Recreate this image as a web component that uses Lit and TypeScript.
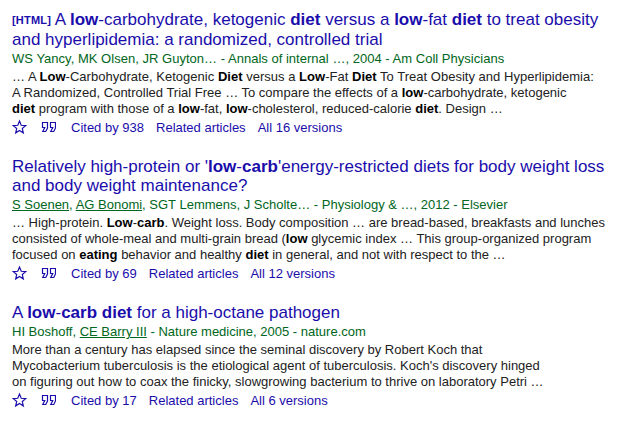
import { LitElement, html, css, TemplateResult } from "lit";
import { customElement, property } from "lit/decorators.js";

@customElement("result-actions")
class ResultActions extends LitElement {
  @property() cited = "";
  @property() versions = "";
  static styles = css`
    :host { display: flex; height: 19px; align-items: center; color: #1a0dab; font-size: 13px; line-height: 19px; }
    svg { display: block; fill: none; stroke: #1a0dab; stroke-width: 1.2; flex: none; width: 15px; height: 16px; margin-right: 14px; margin-top: -1px; }
    .cite { margin-right: 15px; }
    a { margin-right: 12px; }
  `;
  render() {
    return html`<svg viewBox="0 0 15 16"><path d="M7.5 11.57l3.824 2.308-1.015-4.35 3.379-2.926-4.45-.378L7.5 2.122 5.761 6.224l-4.449.378 3.379 2.926-1.015 4.35z"/></svg>
      <svg class="cite" viewBox="0 0 15 16"><path d="M6.5 3.5H1.5V8.5H3.75L1.75 12.5H4.75L6.5 9V3.5zM14.5 3.5H9.5V8.5H11.75L9.75 12.5H12.75L14.5 9V3.5z"/></svg>
      <a>Cited by ${this.cited}</a><a>Related articles</a><a>All ${this.versions} versions</a>`;
  }
}

interface Entry { title: TemplateResult[]; meta: TemplateResult; text: TemplateResult[]; cited: string; versions: string; }

const entries: Entry[] = [
  {
    title: [
      html`<div class="tagged"><span class="tag">[HTML]</span> A <b>low</b>-carbohydrate, ketogenic <b>diet</b> versus a <b>low</b>-fat <b>diet</b> to treat obesity</div>`,
      html`and hyperlipidemia: a randomized, controlled trial`,
    ],
    meta: html`<span class="wide">WS Yancy, MK Olsen, JR Guyton… - Annals of internal …, 2004 - Am Coll Physicians</span>`,
    text: [
      html`<span class="wide">… A <b>Low</b>-Carbohydrate, Ketogenic <b>Diet</b> versus a <b>Low</b>-Fat <b>Diet</b> To Treat Obesity and Hyperlipidemia:</span>`,
      html`A Randomized, Controlled Trial Free … To compare the effects of a <b>low</b>-carbohydrate, ketogenic`,
      html`<b>diet</b> program with those of a <b>low</b>-fat, <b>low</b>-cholesterol, reduced-calorie <b>diet</b>. Design …`,
    ],
    cited: "938", versions: "16",
  },
  {
    title: [
      html`Relatively high-protein or '<b>low</b>-<b>carb</b>'energy-restricted diets for body weight loss`,
      html`and body weight maintenance?`,
    ],
    meta: html`<u>S Soenen</u>, <u>AG Bonomi</u>, SGT Lemmens, J Scholte… - Physiology &amp; …, 2012 - Elsevier`,
    text: [
      html`… High-protein. <b>Low</b>-<b>carb</b>. Weight loss. Body composition … are bread-based, breakfasts and lunches`,
      html`consisted of whole-meal and multi-grain bread (<b>low</b> glycemic index … This group-organized program`,
      html`focused on <b>eating</b> behavior and healthy <b>diet</b> in general, and not with respect to the …`,
    ],
    cited: "69", versions: "12",
  },
  {
    title: [html`A <b>low</b>-<b>carb diet</b> for a high-octane pathogen`],
    meta: html`HI Boshoff, <u>CE Barry III</u> - Nature medicine, 2005 - nature.com`,
    text: [
      html`More than a century has elapsed since the seminal discovery by Robert Koch that`,
      html`Mycobacterium tuberculosis is the etiological agent of tuberculosis. Koch's discovery hinged`,
      html`on figuring out how to coax the finicky, slowgrowing bacterium to thrive on laboratory Petri …`,
    ],
    cited: "17", versions: "6",
  },
];

@customElement("app-root")
class AppRoot extends LitElement {
  static styles = css`
    :host { display: block; box-sizing: border-box; height: 428px; padding: 10px 0 0 12px; background: #fff; overflow: hidden; font-family: "Liberation Sans", Arial, sans-serif; font-size: 13px; }
    article { margin-bottom: 20px; white-space: nowrap; }
    h3 { margin: 0; font-size: 17px; line-height: 19px; font-weight: 400; color: #1a0dab; }
    .tagged { height: 20px; line-height: 20px; }
    .tag { font-size: 11px; font-weight: 700; line-height: 1; letter-spacing: 0.2px; vertical-align: 1px; }
    .meta { height: 20px; line-height: 20px; color: #006621; }
    .wide { letter-spacing: 0.02px; }
    .text { line-height: 16px; color: #222; padding-bottom: 1px; }
    .text b { color: #000; }
  `;
  render() {
    return entries.map((e) => html`<article>
      <h3>${e.title.map((l) => html`<div>${l}</div>`)}</h3>
      <div class="meta">${e.meta}</div>
      <div class="text">${e.text.map((l) => html`<div>${l}</div>`)}</div>
      <result-actions cited=${e.cited} versions=${e.versions}></result-actions>
    </article>`);
  }
}
